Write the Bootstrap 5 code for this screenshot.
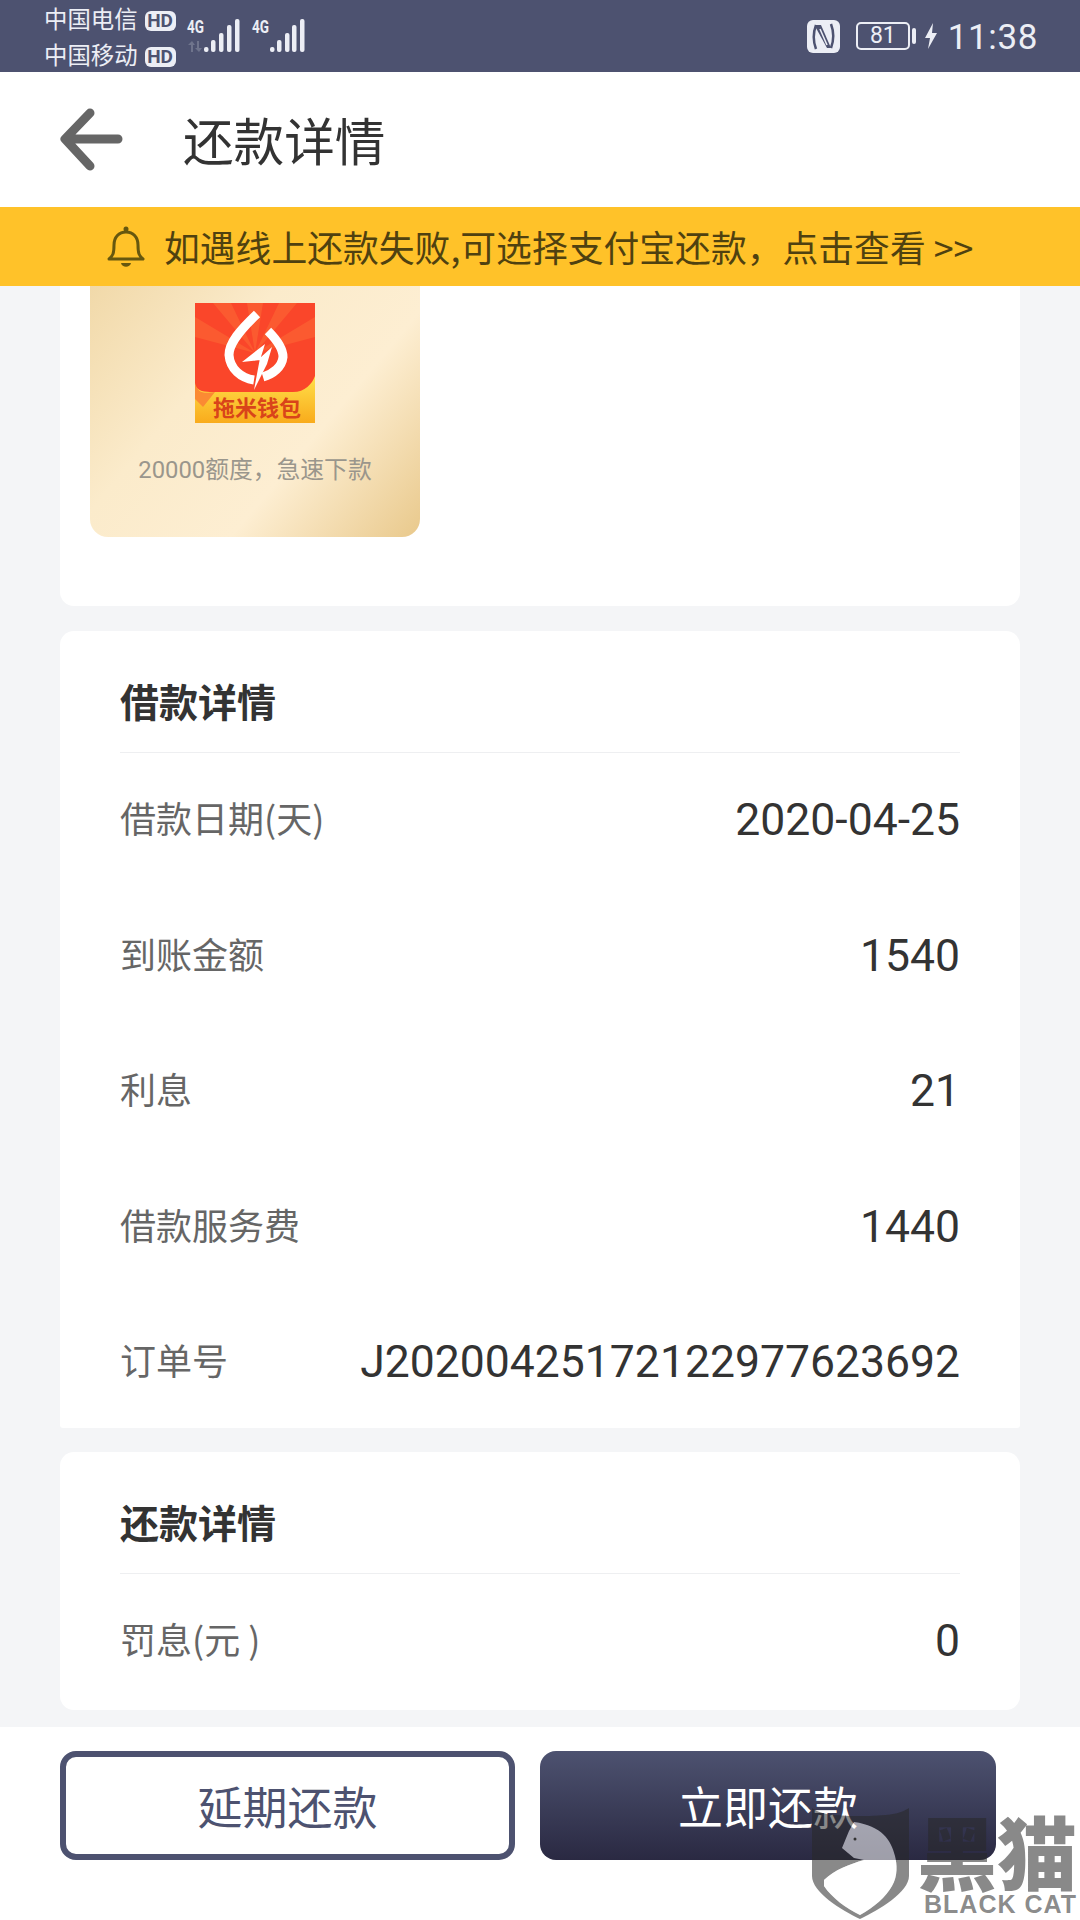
<!DOCTYPE html>
<html lang="zh">
  <head>
    <meta charset="UTF-8" />
    <meta name="viewport" content="width=device-width, initial-scale=1.0" />
    <link href="https://cdn.jsdelivr.net/npm/bootstrap@5.3.0/dist/css/bootstrap.min.css" rel="stylesheet" />
    <title>还款详情</title>
    <style>
      body {
        width: 1080px;
        height: 1920px;
        overflow: hidden;
        background: #f4f5f7;
        font-family: Roboto, "Noto Sans CJK SC", sans-serif;
        color: #333;
      }
      .status-bar {
        height: 72px;
        background: #4d5270;
        color: #eceef5;
        padding: 0 42px 0 44px;
      }
      .carriers {
        font-size: 23.4px;
        line-height: 36px;
        font-family: "Noto Sans CJK SC", sans-serif;
      }
      .hd-tag {
        display: inline-block;
        width: 31px;
        height: 20px;
        margin-left: 7px;
        border-radius: 6px;
        background: #eceef5;
        color: #4d5270;
        font: 700 19px/20px Roboto, sans-serif;
        text-align: center;
        vertical-align: 1px;
      }
      .clock { font-size: 35px; margin-left: 10px; padding-top: 4px; letter-spacing: .6px; }
      .batt-box {
        width: 54px;
        height: 28px;
        border: 2px solid #eceef5;
        border-radius: 5px;
        font-size: 23px;
        line-height: 24px;
        text-align: center;
      }
      .batt-nub { width: 4px; height: 16px; background: #eceef5; border-radius: 2px; margin-left: 2px; }
      .top-head { height: 135px; background: #fff; padding-left: 60px; }
      .top-head h1 {
        font-size: 50.6px;
        font-weight: 400;
        margin: 0 0 0 60px;
        font-family: "Noto Sans CJK SC", sans-serif;
        color: #333;
      }
      .notice-bar {
        height: 79px;
        background: #ffc229;
        color: #4f4110;
        font-size: 35.8px;
        font-family: "Noto Sans CJK SC", sans-serif;
        gap: 18px;
        padding-left: 106px;
      }
      .page-main { height: 1441px; padding: 0 60px; gap: 24px; overflow: hidden; }
      .white-box { background: #fff; border-radius: 14px; overflow: hidden; flex: none; }
      .ad-box { height: 320px; border-radius: 0 0 14px 14px; padding-left: 30px; margin-bottom: 1px; }
      .ad-tile {
        width: 330px;
        height: 251px;
        padding-top: 17px;
        border-radius: 0 0 18px 18px;
        background: linear-gradient(130deg, #f1d9a9 0%, #fbebcb 35%, #fdeed2 65%, #e9c98c 100%);
        color: #9a968c;
        font-size: 23.8px;
        text-align: center;
      }
      .ad-tile p { margin: 31px 0 0; line-height: 32px; }
      .ad-tile svg { display: block; margin: 0 auto 0 105px; }
      .loan-box { height: 797px; padding: 0 60px; border-radius: 14px 14px 3px 3px; }
      .repay-box { height: 258px; padding: 0 60px; }
      .box-title {
        height: 122px;
        padding-top: 17px;
        border-bottom: 1px solid #eeeff1;
        font-size: 39px;
        font-weight: 700;
        color: #333;
        font-family: "Noto Sans CJK SC", sans-serif;
      }
      .info-line { height: 135.5px; }
      .info-key { font-size: 36px; padding-bottom: 7px; color: #666; font-family: "Noto Sans CJK SC", sans-serif; }
      .info-val { font-size: 44.5px; color: #333; }
      .bottom-bar { height: 193px; background: #fff; padding: 24px 84px 0 60px; gap: 25px; }
      .pay-btn {
        width: 455px;
        height: 109px;
        border-radius: 16px;
        font-size: 45px;
        font-family: "Noto Sans CJK SC", sans-serif;
        padding: 0;
      }
      .pay-btn-line { border: 6px solid #4d5270; color: #4d5270; background: #fff; }
      .pay-btn-solid { width: 456px; border: 0; color: #fff; background: linear-gradient(180deg, #4d5270, #2a2942); }
      .wm-shield { position: absolute; left: 812px; top: 1808px; }
      .wm-name {
        position: absolute;
        left: 917px;
        top: 1810px;
        width: 163px;
        color: rgba(40, 40, 40, .55);
        font-family: "Noto Sans CJK SC", sans-serif;
        font-weight: 900;
        font-size: 80px;
        line-height: 78px;
        white-space: nowrap;
      }
      .wm-en {
        position: absolute;
        left: 924px;
        top: 1890px;
        color: rgba(40, 40, 40, .55);
        font: 700 25px/28px "Liberation Sans", sans-serif;
        letter-spacing: 1px;
        white-space: nowrap;
      }
    </style>
  </head>
  <body>
    <div class="status-bar d-flex align-items-center">
      <div class="carriers">
        <div>中国电信<span class="hd-tag">HD</span></div>
        <div>中国移动<span class="hd-tag">HD</span></div>
      </div>
      <svg class="ms-2" width="130" height="50" viewBox="0 0 130 50">
        <g fill="#eceef5">
          <text x="3" y="22" font-family="Roboto" font-weight="700" font-size="18" textLength="17" lengthAdjust="spacingAndGlyphs">4G</text>
          <text x="68" y="22" font-family="Roboto" font-weight="700" font-size="18" textLength="17" lengthAdjust="spacingAndGlyphs">4G</text>
          <rect x="20" y="36" width="4.5" height="5" rx="2" /><rect x="27" y="29" width="4.5" height="12" rx="2" />
          <rect x="35" y="22" width="4.5" height="19" rx="2" /><rect x="43" y="14" width="4.5" height="27" rx="2" />
          <rect x="51" y="8" width="4.5" height="33" rx="2" />
          <rect x="86" y="36" width="4.5" height="5" rx="2" /><rect x="93" y="29" width="4.5" height="12" rx="2" />
          <rect x="101" y="22" width="4.5" height="19" rx="2" /><rect x="108" y="14" width="4.5" height="27" rx="2" />
          <rect x="116" y="8" width="4.5" height="33" rx="2" />
        </g>
        <path d="M7 41v-7H4l4-4 3 4H9v7zM13 30v7h-2l4 4 3-4h-3v-7z" fill="#6f748c" />
      </svg>
      <div class="ms-auto d-flex align-items-center">
        <svg width="33" height="33" viewBox="0 0 33 33" class="me-3">
          <rect width="33" height="33" rx="6" fill="#eceef5" />
          <path d="M9 5C6 13 6 21 9 29" fill="none" stroke="#4d5270" stroke-width="2.5" />
          <path d="M24 4C27 12 27 20 24 28" fill="none" stroke="#4d5270" stroke-width="2.5" />
          <path d="M9 5h5l10 23h-4L9 8z" fill="#4d5270" />
          <path d="M13 9l7 16" stroke="#eceef5" stroke-width="1.6" />
        </svg>
        <div class="batt-box">81</div>
        <div class="batt-nub"></div>
        <svg width="14" height="26" viewBox="0 0 14 26" class="ms-2"><path d="M9 0 1 15h5l-2 11 9-16H8z" fill="#eceef5" /></svg>
        <span class="clock">11:38</span>
      </div>
    </div>

    <div class="top-head d-flex align-items-center">
      <svg width="63" height="63" viewBox="0 0 63 63">
        <path d="M58 31H6M30 5 5 31l25 27" fill="none" stroke="#666" stroke-width="9" stroke-linecap="round" stroke-linejoin="round" />
      </svg>
      <h1>还款详情</h1>
    </div>

    <div class="notice-bar d-flex align-items-center">
      <svg width="40" height="44" viewBox="0 0 40 44">
        <path d="M3 34c4-3 5-6 5-14 0-8 5-13 12-13s12 5 12 13c0 8 1 11 5 14z" fill="none" stroke="#66570f" stroke-width="3" stroke-linejoin="round" />
        <circle cx="20" cy="4" r="2.5" fill="#66570f" /><path d="M15 38h10c-1 5-9 5-10 0z" fill="#66570f" />
      </svg>
      <span>如遇线上还款失败,可选择支付宝还款，点击查看 &gt;&gt;</span>
    </div>

    <main class="page-main d-flex flex-column">
      <section class="white-box ad-box">
        <div class="ad-tile">
          <svg width="120" height="120" viewBox="0 0 120 120">
            <defs>
              <linearGradient id="gold" x1="0" y1="0" x2="0" y2="1"><stop offset="0" stop-color="#ffe04a" /><stop offset="1" stop-color="#f9ab1c" /></linearGradient>
            </defs>
            <rect width="120" height="120" fill="#fa462a" />
            <path d="M60 50 18 0h18zM60 50 52 0h16zM60 50 84 0h18zM60 50 120 14v20zM60 50 0 14v20z" fill="#fb5a30" />
            <path d="M0 120V82c3 8 14 7 24 7h74c12 0 19-8 22-16v47z" fill="url(#gold)" />
            <path d="M0 80c3 10 8 11 20 9L8 104 0 96z" fill="#fb8a33" />
            <path d="M62 11C45 27 34 40 34 52c1 14 12 23 25 25M73 28c9 9 15 17 15 26-1 10-10 17-20 20" fill="none" stroke="#fff" stroke-width="9" />
            <path d="M70 41 47 59l18-2zM77 44 65 55l-6 32 13-26z" fill="#fff" />
            <text x="62" y="113" text-anchor="middle" font-family="Noto Sans CJK SC" font-weight="700" font-size="22" fill="#d9441a">拖米钱包</text>
          </svg>
          <p>20000额度，急速下款</p>
        </div>
      </section>

      <section class="white-box loan-box">
        <div class="box-title d-flex align-items-center">借款详情</div>
        <div class="info-line d-flex justify-content-between align-items-center"><span class="info-key">借款日期(天)</span><span class="info-val">2020-04-25</span></div>
        <div class="info-line d-flex justify-content-between align-items-center"><span class="info-key">到账金额</span><span class="info-val">1540</span></div>
        <div class="info-line d-flex justify-content-between align-items-center"><span class="info-key">利息</span><span class="info-val">21</span></div>
        <div class="info-line d-flex justify-content-between align-items-center"><span class="info-key">借款服务费</span><span class="info-val">1440</span></div>
        <div class="info-line d-flex justify-content-between align-items-center"><span class="info-key">订单号</span><span class="info-val">J20200425172122977623692</span></div>
      </section>

      <section class="white-box repay-box">
        <div class="box-title d-flex align-items-center">还款详情</div>
        <div class="info-line d-flex justify-content-between align-items-center"><span class="info-key">罚息(元 )</span><span class="info-val">0</span></div>
      </section>
    </main>

    <footer class="bottom-bar d-flex">
      <button type="button" class="btn pay-btn pay-btn-line">延期还款</button>
      <button type="button" class="btn pay-btn pay-btn-solid">立即还款</button>
    </footer>

    <svg class="wm-shield" width="97" height="111" viewBox="0 0 97 111">
      <path fill-rule="evenodd" fill="rgba(40,40,40,.55)" d="M0 0c8 6 20 8 48 8s40-2 49-8v68c0 16-30 34-49 43C29 102 0 84 0 68zM42 14 37 23 30 40 42 50l10 2C38 56 22 62 12 72v6c8 12 22 22 36 29 14-8 26-18 32-29 6-10 5-22 3-30C79 32 70 18 42 14z" />
      <path fill="rgba(255,255,255,.55)" d="M42 14 37 23 30 40 42 50l10 2C38 56 22 62 12 72v6c8 12 22 22 36 29 14-8 26-18 32-29 6-10 5-22 3-30C79 32 70 18 42 14z" />
      <circle cx="43" cy="31" r="1.5" fill="#333" />
    </svg>
    <div class="wm-name">黑猫</div>
    <div class="wm-en">BLACK CAT</div>

    <script src="https://cdn.jsdelivr.net/npm/bootstrap@5.3.0/dist/js/bootstrap.bundle.min.js"></script>
  </body>
</html>
